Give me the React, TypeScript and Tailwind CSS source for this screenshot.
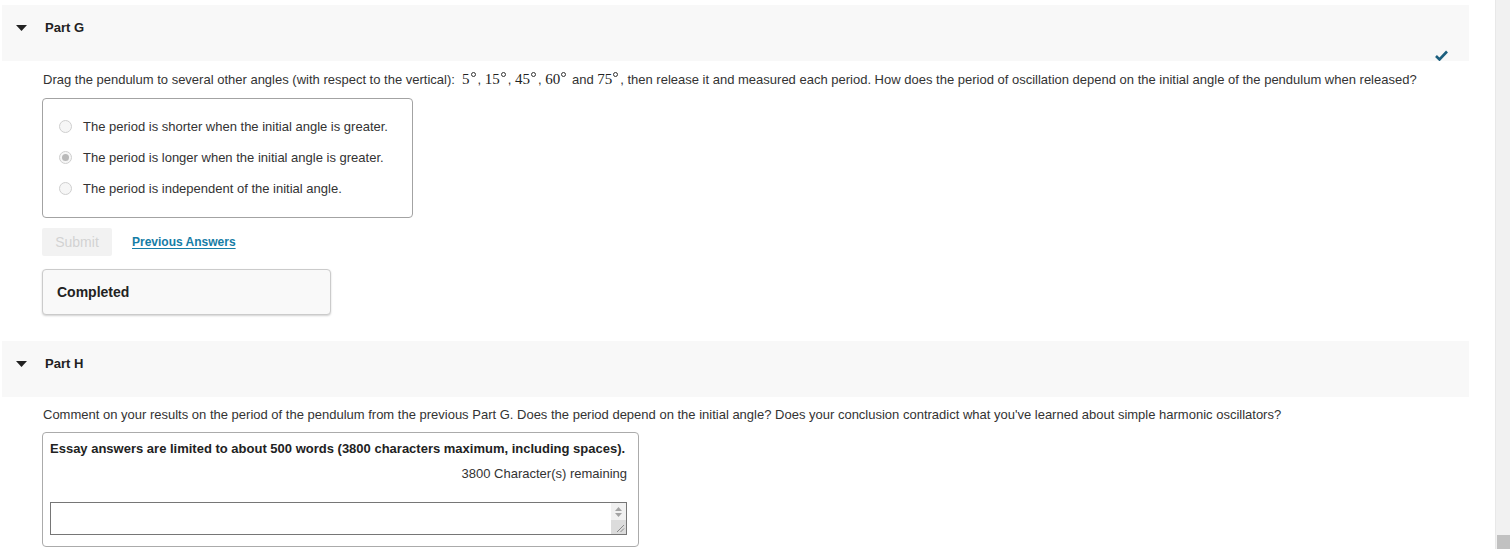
import React from "react";

const Deg = ({ n }: { n: string }) => (
  <span className="font-['Liberation_Serif','DejaVu_Serif',serif] text-[15px] text-[#222] mr-[2px]">
    {n}
    <span className="inline-block w-[5px] h-[5px] rounded-full border border-[#333] align-top mt-[2px] ml-[1px]" />
  </span>
);

const Triangle = () => (
  <svg width="11" height="6" viewBox="0 0 11 6" className="block">
    <path d="M0 0 L11 0 L5.5 6 Z" fill="#222" />
  </svg>
);

const Radio = ({ checked }: { checked?: boolean }) => (
  <span className="w-[13px] h-[13px] rounded-full border border-[#cfcfcf] bg-[#f6f6f6] flex items-center justify-center shrink-0">
    {checked && <span className="w-[7px] h-[7px] rounded-full bg-[#b9b9b9]" />}
  </span>
);

const Header = ({ title, children }: { title: string; children?: React.ReactNode }) => (
  <div className="relative h-[56px] w-[1467px] bg-[#f8f8f8] pt-[15px]">
    <div className="flex items-center h-[16px]">
      <div className="w-[14px]" />
      <Triangle />
      <span className="ml-[18px] font-bold text-[13px] text-[#222] leading-[16px]">{title}</span>
    </div>
    {children}
  </div>
);

export default function App() {
  return (
    <div className="w-[1510px] h-[549px] overflow-hidden bg-white flex font-['Liberation_Sans',Arial,sans-serif] text-[13px] text-[#333]">
      <div className="w-[1495px] pt-[5px] pl-[2px]">
        {/* Part G */}
        <Header title="Part G">
          <svg width="13" height="11" viewBox="0 0 13 11" className="absolute left-[1433px] top-[45px]">
            <path d="M1 6 L4.5 9.5 L12 1.5" stroke="#1c5f7e" strokeWidth="2.6" fill="none" />
          </svg>
        </Header>
        <div className="pl-[40px]">
          <p className="mt-[9px] leading-[18px] whitespace-nowrap pl-[1px]">
            Drag the pendulum to several other angles (with respect to the vertical):&nbsp;&nbsp;
            <Deg n="5" />, <Deg n="15" />, <Deg n="45" />, <Deg n="60" />&nbsp;and <Deg n="75" />, then release it and
            measured each period. How does the period of oscillation depend on the initial angle of the pendulum when
            released?
          </p>
          <div className="mt-[9px] w-[371px] h-[120px] border border-[#a3a3a3] rounded-[4px] pt-[12px] pl-[16px]">
            {[
              ["The period is shorter when the initial angle is greater.", false],
              ["The period is longer when the initial angle is greater.", true],
              ["The period is independent of the initial angle.", false],
            ].map(([t, c], i) => (
              <div key={i} className="h-[31px] flex items-center">
                <Radio checked={c as boolean} />
                <span className="ml-[11px] leading-[16px]">{t as string}</span>
              </div>
            ))}
          </div>
          <div className="mt-[10px] flex items-center">
            <div className="w-[70px] h-[28px] bg-[#f2f2f2] rounded-[2px] flex items-center justify-center text-[14px] text-[#d2d2d2]">
              Submit
            </div>
            <span className="ml-[20px] text-[12px] font-bold text-[#157da6] underline underline-offset-[2px]">
              Previous Answers
            </span>
          </div>
          <div className="mt-[13px] w-[289px] h-[46px] bg-[#f9f9f9] border border-[#cbcbcb] rounded-[4px] shadow-[0_1px_2px_rgba(0,0,0,0.18)] flex items-center pl-[14px]">
            <span className="font-bold text-[14px] text-[#222]">Completed</span>
          </div>
        </div>

        {/* Part H */}
        <div className="mt-[26px]">
          <Header title="Part H" />
        </div>
        <div className="pl-[40px]">
          <p className="mt-[9px] leading-[18px] whitespace-nowrap pl-[1px]">
            Comment on your results on the period of the pendulum from the previous Part G. Does the period depend on the
            initial angle? Does your conclusion contradict what you've learned about simple harmonic oscillators?
          </p>
          <div className="mt-[8px] w-[597px] h-[115px] border border-[#ababab] rounded-[4px] pt-[7px] pl-[7px] pr-[11px]">
            <div className="font-bold text-[#222] leading-[18px] whitespace-nowrap">
              Essay answers are limited to about 500 words (3800 characters maximum, including spaces).
            </div>
            <div className="mt-[7px] leading-[18px] text-right">3800 Character(s) remaining</div>
            <div className="mt-[19px] h-[33px] border border-[#767676] bg-white flex justify-end">
              <div className="w-[15px] h-full bg-[#f1f1f1] flex flex-col items-center">
                <svg width="7" height="4" viewBox="0 0 7 4" className="mt-[4px]">
                  <path d="M0 4 L3.5 0 L7 4 Z" fill="#a3a3a3" />
                </svg>
                <svg width="7" height="4" viewBox="0 0 7 4" className="mt-[2px]">
                  <path d="M0 0 L3.5 4 L7 0 Z" fill="#a3a3a3" />
                </svg>
                <div className="flex-1 w-full bg-[#dcdcdc] mt-[3px] relative">
                  <svg width="10" height="10" viewBox="0 0 10 10" className="absolute right-[1px] bottom-[1px]">
                    <path d="M9 2 L2 9 M9 5.5 L5.5 9" stroke="#8a8a8a" strokeWidth="1" />
                  </svg>
                </div>
              </div>
            </div>
          </div>
        </div>
      </div>
      {/* page scrollbar */}
      <div className="w-[15px] h-full bg-[#f1f1f1] border-l border-[#e8e8e8] flex flex-col justify-end items-end">
        <div className="w-[13px] h-[14px] bg-[#c1c1c1]" />
      </div>
    </div>
  );
}
